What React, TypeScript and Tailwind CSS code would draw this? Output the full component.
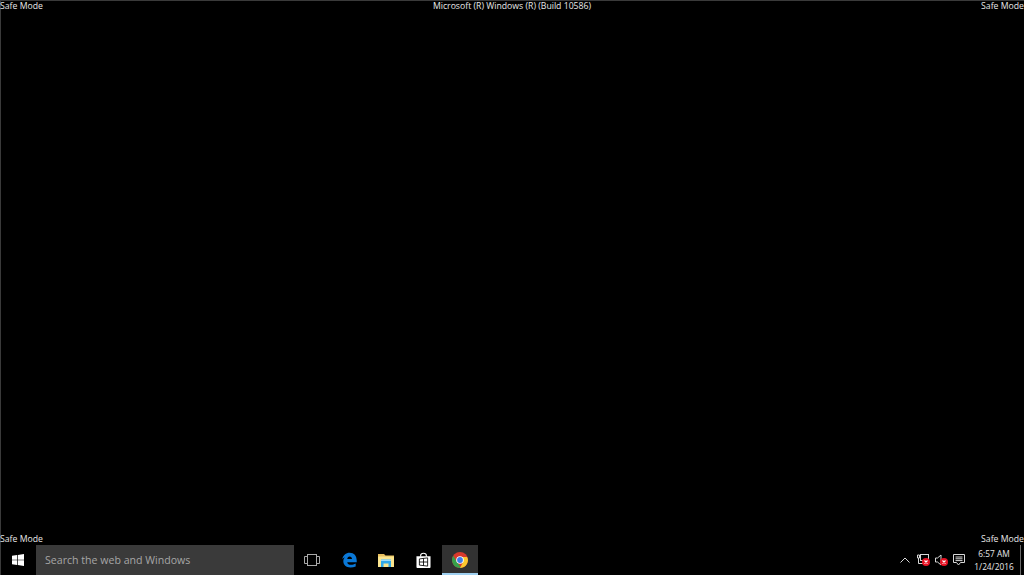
import React from 'react';

const labelFont = "font-['Open_Sans','Noto_Sans',sans-serif]";

const WindowsLogo = ({ className }: { className?: string }) => (
  <svg viewBox="0 0 14 14" className={className} fill="currentColor">
    <path d="M0 2.1 L6 1.2 V6.6 H0 Z" />
    <path d="M6.8 1.1 L14 0 V6.6 H6.8 Z" />
    <path d="M0 7.4 H6 V12.8 L0 11.9 Z" />
    <path d="M6.8 7.4 H14 V14 L6.8 12.9 Z" />
  </svg>
);

const TaskViewIcon = () => (
  <svg viewBox="0 0 16 12" className="h-[12px] w-[16px]" fill="none" stroke="#a8a8a8" strokeWidth="1">
    <rect x="3.5" y="0.5" width="9" height="11" />
    <path d="M3.5 2.5 H0.5 V9.5 H3.5" />
    <path d="M12.5 2.5 H15.5 V9.5 H12.5" />
  </svg>
);

const EdgeIcon = () => (
  <svg viewBox="0 0 16 16" className="h-[16px] w-[15px]">
    <path
      fill="#0a78d7"
      fillRule="evenodd"
      d="M0.3 7 C1 2.8 4.2 0.2 8.2 0.2 C12.8 0.2 15.7 3.4 15.7 8.6 V10.3 H5.6 C5.8 12.2 7.4 13 9.6 13 C11.4 13 12.9 12.6 14.6 11.7 V15 C12.9 15.7 11 16 9 16 C4.4 16 1.4 13.4 1.4 9.4 C1.4 7.6 2 6.2 3 5 C1.9 5.6 1 6.2 0.3 7 Z M5.6 7 H10.7 C10.6 5.3 9.7 4.2 8.1 4.2 C6.6 4.2 5.8 5.4 5.6 7 Z"
    />
  </svg>
);

const FolderIcon = () => (
  <svg viewBox="0 0 16 14" className="h-[14px] w-[16px]">
    <path fill="#e8bf5e" d="M0 1 H6 L7.5 2.5 H16 V14 H0 Z" />
    <path fill="#fbe58f" d="M0 3.5 H16 V14 H0 Z" />
    <path fill="#30a8e8" d="M3 6.5 H13 V14 H10.5 V10.5 H5.5 V14 H3 Z" />
    <path fill="#9fdcf8" d="M3 6.5 H13 V8 H3 Z" />
  </svg>
);

const StoreIcon = () => (
  <svg viewBox="0 0 16 17" className="h-[17px] w-[15px]">
    <path fill="none" stroke="#fff" strokeWidth="1.2" d="M5 4.5 V3 C5 1.5 6.3 0.8 8 0.8 C9.7 0.8 11 1.5 11 3 V4.5" />
    <path fill="#fff" d="M0.5 4 H15.5 V15.5 C15.5 16.2 15 16.6 14.4 16.6 H1.6 C1 16.6 0.5 16.2 0.5 15.5 Z" />
    <path fill="none" stroke="#000" strokeWidth="0.9" d="M3.6 6.8 L12.4 5.7 V14.5 L3.6 13.4 Z M8 6.2 V14 M3.6 10.1 H12.4" />
  </svg>
);

const ChromeIcon = () => (
  <svg viewBox="0 0 32 32" className="h-[16px] w-[16px]">
    <circle cx="16" cy="16" r="16" fill="#d8392c" />
    <path fill="#36a04a" d="M16 32 C7.2 32 0 24.8 0 16 C0 12.8 1 9.8 2.6 7.4 L10.5 20.5 L19 32 Z" />
    <path fill="#fbc82f" d="M16 10 H30 C31.3 12 32 14 32 16 C32 24.8 24.8 32 16 32 L22 20 Z" />
    <circle cx="16" cy="16" r="7.6" fill="#fff" />
    <circle cx="16" cy="16" r="5.8" fill="#3d7de8" />
  </svg>
);

const ErrorBadge = () => (
  <span className="absolute right-0 bottom-0 flex h-[8px] w-[8px] items-center justify-center rounded-full bg-[#e81123]">
    <svg viewBox="0 0 8 8" className="h-[8px] w-[8px]" stroke="#fff" strokeWidth="1.1">
      <path d="M2.5 2.5 L5.5 5.5 M5.5 2.5 L2.5 5.5" />
    </svg>
  </span>
);

const ChevronUpIcon = () => (
  <svg viewBox="0 0 10 6" className="h-[6px] w-[10px]" fill="none" stroke="#d8d8d8" strokeWidth="1">
    <path d="M0.5 5.5 L5 1 L9.5 5.5" />
  </svg>
);

const NetworkIcon = () => (
  <span className="relative block h-[12px] w-[13px]">
    <svg viewBox="0 0 12 11" className="h-[11px] w-[12px]" fill="none" stroke="#d8d8d8" strokeWidth="1">
      <rect x="3.5" y="0.5" width="8" height="6" />
      <path d="M0.5 1 H2.5 V4 H0.5 Z M1.5 4 V9.5 H6" />
    </svg>
    <ErrorBadge />
  </span>
);

const SpeakerIcon = () => (
  <span className="relative block h-[12px] w-[13px]">
    <svg viewBox="0 0 8 12" className="h-[12px] w-[8px]" fill="none" stroke="#d8d8d8" strokeWidth="1">
      <path d="M0.5 4 H2.5 L6 1 V11 L2.5 8 H0.5 Z" />
    </svg>
    <ErrorBadge />
  </span>
);

const ActionCenterIcon = () => (
  <svg viewBox="0 0 12 12" className="h-[12px] w-[12px]" fill="none" stroke="#d8d8d8" strokeWidth="1">
    <path d="M0.5 0.5 H11.5 V8.5 H7.5 L5.5 11 L3.5 8.5 H0.5 Z" />
    <path d="M2.5 3 H9.5 M2.5 4.8 H9.5 M2.5 6.6 H9.5" />
  </svg>
);

const App = () => {
  return (
    <div className={`flex h-[575px] w-[1024px] flex-col overflow-hidden bg-black text-[#e8e8e8] shadow-[inset_1px_1px_0_#3a3a3a] ${labelFont}`}>
      <div className="flex h-[545px] flex-col justify-between">
        <div className="flex h-[12px] items-center justify-between text-[8.7px] leading-[12px]">
          <span>Safe Mode</span>
          <span>Microsoft (R) Windows (R) (Build 10586)</span>
          <span>Safe Mode</span>
        </div>
        <div className="flex h-[12px] items-center justify-between text-[8.7px] leading-[12px]">
          <span>Safe Mode</span>
          <span>Safe Mode</span>
        </div>
      </div>

      <div className="flex h-[30px] items-stretch">
        <div className="flex w-[36px] items-center justify-center text-white">
          <WindowsLogo className="h-[12px] w-[12px]" />
        </div>
        <div className="flex w-[258px] items-center bg-[#3a3a3a] pt-[2px] pl-[9px] text-[10.6px] text-[#a6a6a6]">
          Search the web and Windows
        </div>
        <div className="flex w-[36px] items-center justify-center">
          <TaskViewIcon />
        </div>
        <div className="flex w-[38px] items-center justify-center">
          <EdgeIcon />
        </div>
        <div className="flex w-[36px] items-center justify-center">
          <FolderIcon />
        </div>
        <div className="flex w-[38px] items-center justify-center">
          <StoreIcon />
        </div>
        <div className="flex w-[36px] items-center justify-center border-b-2 border-[#9fd0f0] bg-[#323232] pt-[2px]">
          <ChromeIcon />
        </div>

        <div className="ml-auto flex items-center pr-[3px]">
          <ChevronUpIcon />
          <span className="ml-[7px]"><NetworkIcon /></span>
          <span className="ml-[5px]"><SpeakerIcon /></span>
          <span className="ml-[5px]"><ActionCenterIcon /></span>
          <div className="ml-[6px] flex w-[46px] flex-col items-center text-[8.3px] leading-[13px]">
            <span>6:57 AM</span>
            <span>1/24/2016</span>
          </div>
          <div className="ml-[3px] h-full w-px bg-[#6a6a6a]" />
        </div>
      </div>
    </div>
  );
};

export default App;
